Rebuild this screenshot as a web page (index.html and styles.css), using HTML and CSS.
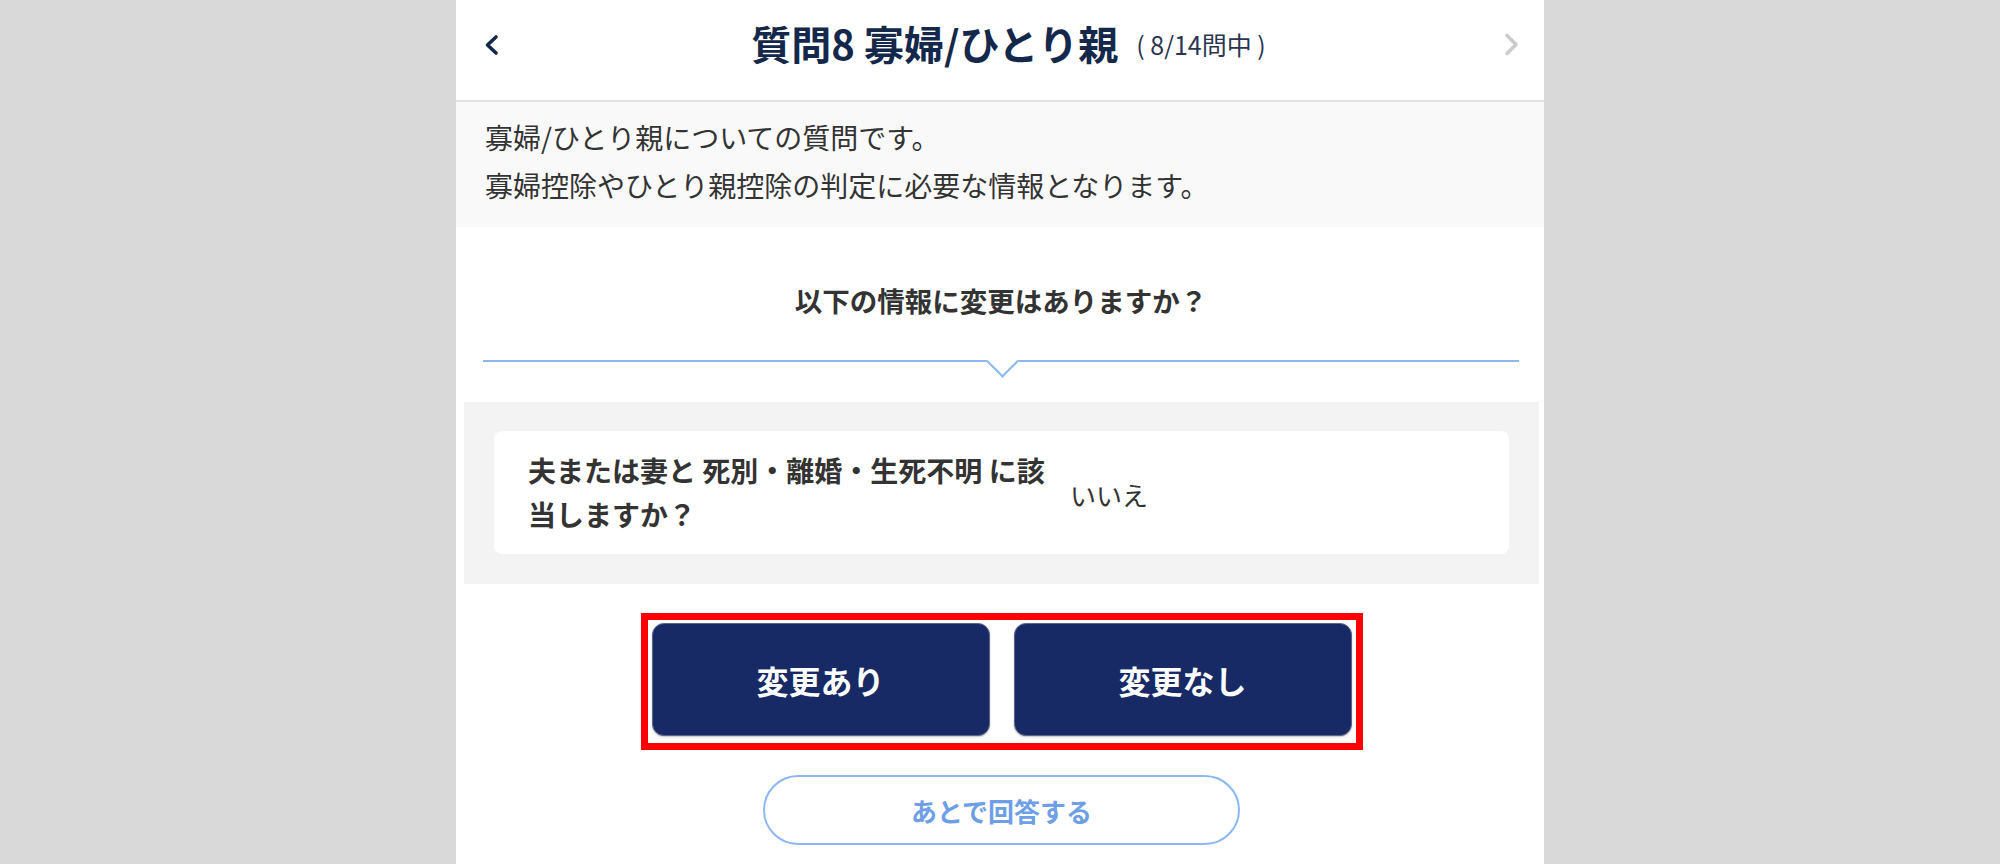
FILE: index.html
```html
<!DOCTYPE html>
<html lang="ja">
<head>
<meta charset="utf-8">
<title>質問8 寡婦/ひとり親</title>
<link rel="stylesheet" href="styles.css">
</head>
<body>
<div class="panel">
  <header class="hdr">
    <button class="nav prev" aria-label="前へ">
      <svg width="17" height="22" viewBox="0 0 17 22"><polyline points="13,3 4.5,11 13,19" fill="none" stroke="#14284b" stroke-width="3.6" stroke-linecap="round" stroke-linejoin="round"/></svg>
    </button>
    <h1 class="ttl"><span class="ttl-main">質問8 寡婦/ひとり親</span><span class="ttl-sub">( 8/14問中 )</span></h1>
    <button class="nav next" aria-label="次へ">
      <svg width="17" height="25" viewBox="0 0 17 25"><polyline points="4,3.5 13,12.5 4,21.5" fill="none" stroke="#cbcbcb" stroke-width="3.6" stroke-linecap="round" stroke-linejoin="round"/></svg>
    </button>
  </header>

  <section class="desc">
    <p>寡婦/ひとり親についての質問です。</p>
    <p>寡婦控除やひとり親控除の判定に必要な情報となります。</p>
  </section>

  <section class="qsec">
    <h2 class="q">以下の情報に変更はありますか？</h2>
    <div class="divider"></div>
  </section>

  <section class="infobox">
    <dl class="card">
      <dt class="label">夫または妻と 死別・離婚・生死不明 に該当しますか？</dt>
      <dd class="value">いいえ</dd>
    </dl>
  </section>

  <div class="actions">
    <div class="highlight">
      <button class="btn">変更あり</button>
      <button class="btn">変更なし</button>
    </div>
  </div>

  <div class="later-wrap">
    <button class="later">あとで回答する</button>
  </div>
</div>
</body>
</html>
```

FILE: styles.css
```css
* { box-sizing: border-box; }
html, body { margin: 0; padding: 0; }
body {
  background: #d9d9d9;
  font-family: "Noto Sans CJK JP", "Noto Sans", sans-serif;
  color: #333;
  height: 864px;
  overflow: hidden;
}
.panel {
  width: 1088px;
  margin: 0 0 0 456px;
  background: #fff;
  min-height: 864px;
}
button { font-family: inherit; cursor: pointer; }

.hdr {
  height: 102px;
  border-bottom: 2px solid #e3e3e3;
  display: flex;
  align-items: center;
  padding: 0 24px 0 27px;
}
.nav {
  background: none;
  border: 0;
  padding: 0;
  display: flex;
  align-items: center;
}
.prev { margin-top: -11px; }
.next { margin-top: -11px; }
.ttl {
  flex: 1;
  margin: -15px 0 0 0;
  padding-left: 14px;
  display: flex;
  justify-content: center;
  align-items: center;
  font-weight: 700;
}
.ttl-main {
  font-size: 40px;
  color: #14284b;
}
.ttl-sub {
  font-size: 25px;
  font-weight: 400;
  color: #2b3550;
  margin-left: 18px;
  margin-top: 2px;
}

.desc {
  background: #f9f9f9;
  padding: 11px 29px 18px;
}
.desc p {
  margin: 0;
  font-size: 28px;
  line-height: 48px;
  color: #333;
}

.qsec {
  padding: 53px 25px 0 27px;
}
.q {
  margin: 0;
  text-align: center;
  font-size: 27.5px;
  line-height: 40px;
  font-weight: 700;
  color: #333;
}
.divider {
  position: relative;
  margin-top: 40px;
  height: 2px;
  background: #8cb8ef;
}
.divider::after {
  content: "";
  position: absolute;
  left: 50%;
  top: -10px;
  width: 21px;
  height: 21px;
  margin-left: -10px;
  background: #fff;
  border-right: 2px solid #8cb8ef;
  border-bottom: 2px solid #8cb8ef;
  transform: rotate(45deg);
}

.infobox {
  margin: 40px 5px 0 8px;
  background: #f3f3f3;
  padding: 29px 30px 30px;
}
.card {
  margin: 0;
  background: #fff;
  border-radius: 8px;
  padding: 17px 34px 18px;
  display: grid;
  grid-template-columns: 530px 1fr;
  column-gap: 12px;
  align-items: center;
}
.label {
  font-size: 28px;
  line-height: 44px;
  font-weight: 700;
  color: #333;
}
.value {
  margin: 0;
  padding-top: 5px;
  font-size: 26px;
  color: #333;
}

.actions {
  display: flex;
  justify-content: center;
  margin-top: 29px;
  padding-left: 3px;
}
.highlight {
  border: 7px solid #ff0000;
  padding: 3px 4px 7px;
  display: flex;
  gap: 24px;
}
.btn {
  width: 338px;
  height: 113px;
  border: 1px solid #5d6688;
  border-radius: 12px;
  background: #172a65;
  color: #fff;
  font-size: 32px;
  font-weight: 700;
  box-shadow: 0 1px 2px rgba(0,0,0,0.25);
}

.later-wrap {
  display: flex;
  justify-content: center;
  margin-top: 25px;
  padding-left: 3px;
}
.later {
  width: 477px;
  height: 70px;
  border: 2px solid #8db7f2;
  border-radius: 35px;
  background: #fff;
  color: #6e9ee6;
  font-size: 26px;
  font-weight: 700;
}
```
